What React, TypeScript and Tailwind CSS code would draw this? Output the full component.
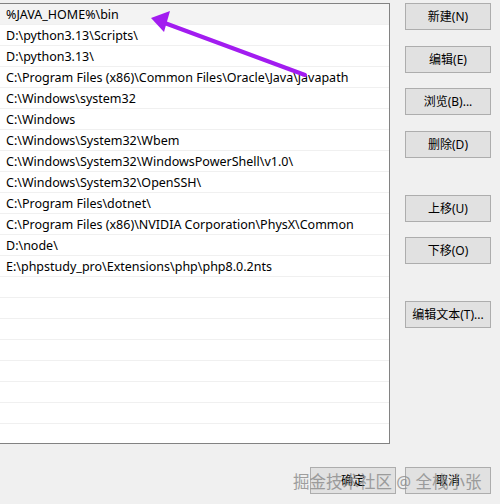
const paths = [
  '%JAVA_HOME%\\bin',
  'D:\\python3.13\\Scripts\\',
  'D:\\python3.13\\',
  'C:\\Program Files (x86)\\Common Files\\Oracle\\Java\\javapath',
  'C:\\Windows\\system32',
  'C:\\Windows',
  'C:\\Windows\\System32\\Wbem',
  'C:\\Windows\\System32\\WindowsPowerShell\\v1.0\\',
  'C:\\Windows\\System32\\OpenSSH\\',
  'C:\\Program Files\\dotnet\\',
  'C:\\Program Files (x86)\\NVIDIA Corporation\\PhysX\\Common',
  'D:\\node\\',
  'E:\\phpstudy_pro\\Extensions\\php\\php8.0.2nts',
];

const rows = [...paths, ...Array(8).fill('')];

function WinButton({ label, className = '' }: { label: string; className?: string }) {
  return (
    <button className={`w-[86px] h-[27px] border border-[#adadad] bg-[#e1e1e1] text-[12px] text-black leading-none ${className}`}>
      {label}
    </button>
  );
}

export default function App() {
  return (
    <div
      className="relative w-[500px] h-[504px] overflow-hidden bg-[#f0f0f0]"
      style={{ fontFamily: '"Noto Sans", "Noto Sans CJK SC", sans-serif' }}
    >
      <div className="flex h-[462px]">
        <div className="mt-[3px] w-[390px] h-[441px] border border-l-0 border-[#828282] bg-white overflow-hidden">
          {rows.map((p, i) => (
            <div
              key={i}
              className={`h-[21px] flex items-center pl-[6px] pt-[2px] text-[12.5px] text-black whitespace-nowrap border-b border-[#f0f0f0] ${i === 0 ? 'bg-[#f3f3f3]' : ''}`}
            >
              {p}
            </div>
          ))}
        </div>
        <div className="ml-[15px] mt-[3px] flex flex-col">
          <WinButton label="新建(N)" />
          <WinButton label="编辑(E)" className="mt-[16px]" />
          <WinButton label="浏览(B)..." className="mt-[15px]" />
          <WinButton label="删除(D)" className="mt-[16px]" />
          <WinButton label="上移(U)" className="mt-[37px]" />
          <WinButton label="下移(O)" className="mt-[15px]" />
          <WinButton label="编辑文本(T)..." className="mt-[37px]" />
        </div>
      </div>
      <div className="flex justify-end gap-[9px] pr-[9px] mt-[5px]">
        <WinButton label="确定" />
        <WinButton label="取消" />
      </div>

      {/* watermark */}
      <div className="absolute left-[293px] top-[470px] text-[16.5px] text-[#8a8a8a] opacity-80 whitespace-nowrap">
        掘金技术社区 @ 全栈小张
      </div>

      {/* annotation arrow */}
      <svg className="absolute left-0 top-0 pointer-events-none" width="500" height="504">
        <line x1="305" y1="75" x2="162" y2="22" stroke="#a21cf0" strokeWidth="4" strokeLinecap="round" />
        <polygon points="151,18 170,11 164,32" fill="#a21cf0" />
      </svg>
    </div>
  );
}
